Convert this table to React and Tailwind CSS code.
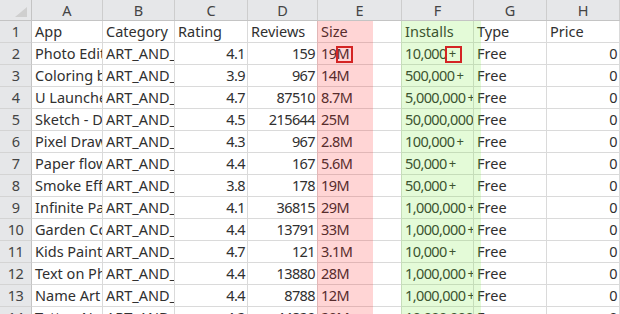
import React from 'react';

const cols = ['A', 'B', 'C', 'D', 'E', 'F', 'G', 'H'];

// App, Category, Rating, Reviews, Size, Installs, Type, Price
const rows = [
  ['App', 'Category', 'Rating', 'Reviews', 'Size', 'Installs', 'Type', 'Price'],
  ['Photo Editor & Candy Camera & Grid & ScrapBook', 'ART_AND_DESIGN', 4.1, 159, '19M', '10,000+', 'Free', 0],
  ['Coloring book moana', 'ART_AND_DESIGN', 3.9, 967, '14M', '500,000+', 'Free', 0],
  ['U Launcher Lite – FREE Live Cool Themes, Hide Apps', 'ART_AND_DESIGN', 4.7, 87510, '8.7M', '5,000,000+', 'Free', 0],
  ['Sketch - Draw & Paint', 'ART_AND_DESIGN', 4.5, 215644, '25M', '50,000,000+', 'Free', 0],
  ['Pixel Draw - Number Art Coloring Book', 'ART_AND_DESIGN', 4.3, 967, '2.8M', '100,000+', 'Free', 0],
  ['Paper flowers instructions', 'ART_AND_DESIGN', 4.4, 167, '5.6M', '50,000+', 'Free', 0],
  ['Smoke Effect Photo Maker - Smoke Editor', 'ART_AND_DESIGN', 3.8, 178, '19M', '50,000+', 'Free', 0],
  ['Infinite Painter', 'ART_AND_DESIGN', 4.1, 36815, '29M', '1,000,000+', 'Free', 0],
  ['Garden Coloring Book', 'ART_AND_DESIGN', 4.4, 13791, '33M', '1,000,000+', 'Free', 0],
  ['Kids Paint Free - Drawing Fun', 'ART_AND_DESIGN', 4.7, 121, '3.1M', '10,000+', 'Free', 0],
  ['Text on Photo - Fonts Studio', 'ART_AND_DESIGN', 4.4, 13880, '28M', '1,000,000+', 'Free', 0],
  ['Name Art Photo Editor - Focus n Filters', 'ART_AND_DESIGN', 4.4, 8788, '12M', '1,000,000+', 'Free', 0],
  ['Tattoo Name On My Photo Editor', 'ART_AND_DESIGN', 4.2, 44829, '20M', '10,000,000+', 'Free', 0],
];

const grid = 'grid grid-cols-[32px_71px_72px_73px_70px_84px_72px_73px_1fr]';

function Cell({ value }) {
  const isNum = typeof value === 'number';
  const numeric = isNum || /^[\d.,]+[M+]?$/.test(value);
  const plus = typeof value === 'string' && value.endsWith('+');
  return (
    <div
      className={`h-[22px] border-r border-b border-[#dadada] overflow-hidden whitespace-nowrap flex items-center ${
        isNum ? 'justify-end pr-[2px]' : 'pl-[3px]'
      } ${numeric ? 'tracking-[-0.6px]' : ''}`}
    >
      {plus ? (
        <>
          {value.slice(0, -1)}
          <span className="px-[2px] text-[13px] tracking-normal">+</span>
        </>
      ) : (
        value
      )}
    </div>
  );
}

export default function App() {
  return (
    <div
      className="relative w-[620px] h-[314px] overflow-hidden bg-white text-[14.5px] text-[#303030]"
      style={{ fontFamily: '"Noto Sans", "Open Sans", sans-serif' }}
    >
      {/* Column headers */}
      <div className={`${grid} h-[21px] bg-[#e6e7e9] text-[#444] border-b border-[#c4c4c4]`}>
        <div className="relative border-r border-[#c4c4c4]">
          <svg className="absolute left-[14px] top-[7px]" width="14" height="11" viewBox="0 0 14 11">
            <polygon points="13,0 13,10 1,10" fill="#cfcfcf" />
          </svg>
        </div>
        {cols.map((c) => (
          <div key={c} className="flex items-center justify-center border-r border-[#cdcdcd] leading-none">
            {c}
          </div>
        ))}
      </div>

      {/* Rows */}
      {rows.map((r, i) => (
        <div key={i} className={grid}>
          <div className="h-[22px] bg-[#e6e7e9] text-[#444] border-r border-b border-[#c4c4c4] border-b-[#d4d4d4] flex items-center justify-center tracking-[-0.6px]">
            {i + 1}
          </div>
          {r.map((v, j) => (
            <Cell key={j} value={v} />
          ))}
        </div>
      ))}

      {/* Highlighted columns */}
      <div className="absolute left-[317px] top-[21px] w-[56px] h-[300px] bg-[rgba(255,30,30,0.19)] pointer-events-none" />
      <div className="absolute left-[401px] top-[21px] w-[80px] h-[300px] bg-[rgba(110,235,50,0.19)] pointer-events-none" />

      {/* Red marker boxes */}
      <div className="absolute left-[336px] top-[46px] w-[17px] h-[17px] border-2 border-[#d42424] pointer-events-none" />
      <div className="absolute left-[445px] top-[46px] w-[17px] h-[17px] border-2 border-[#d42424] pointer-events-none" />
    </div>
  );
}
